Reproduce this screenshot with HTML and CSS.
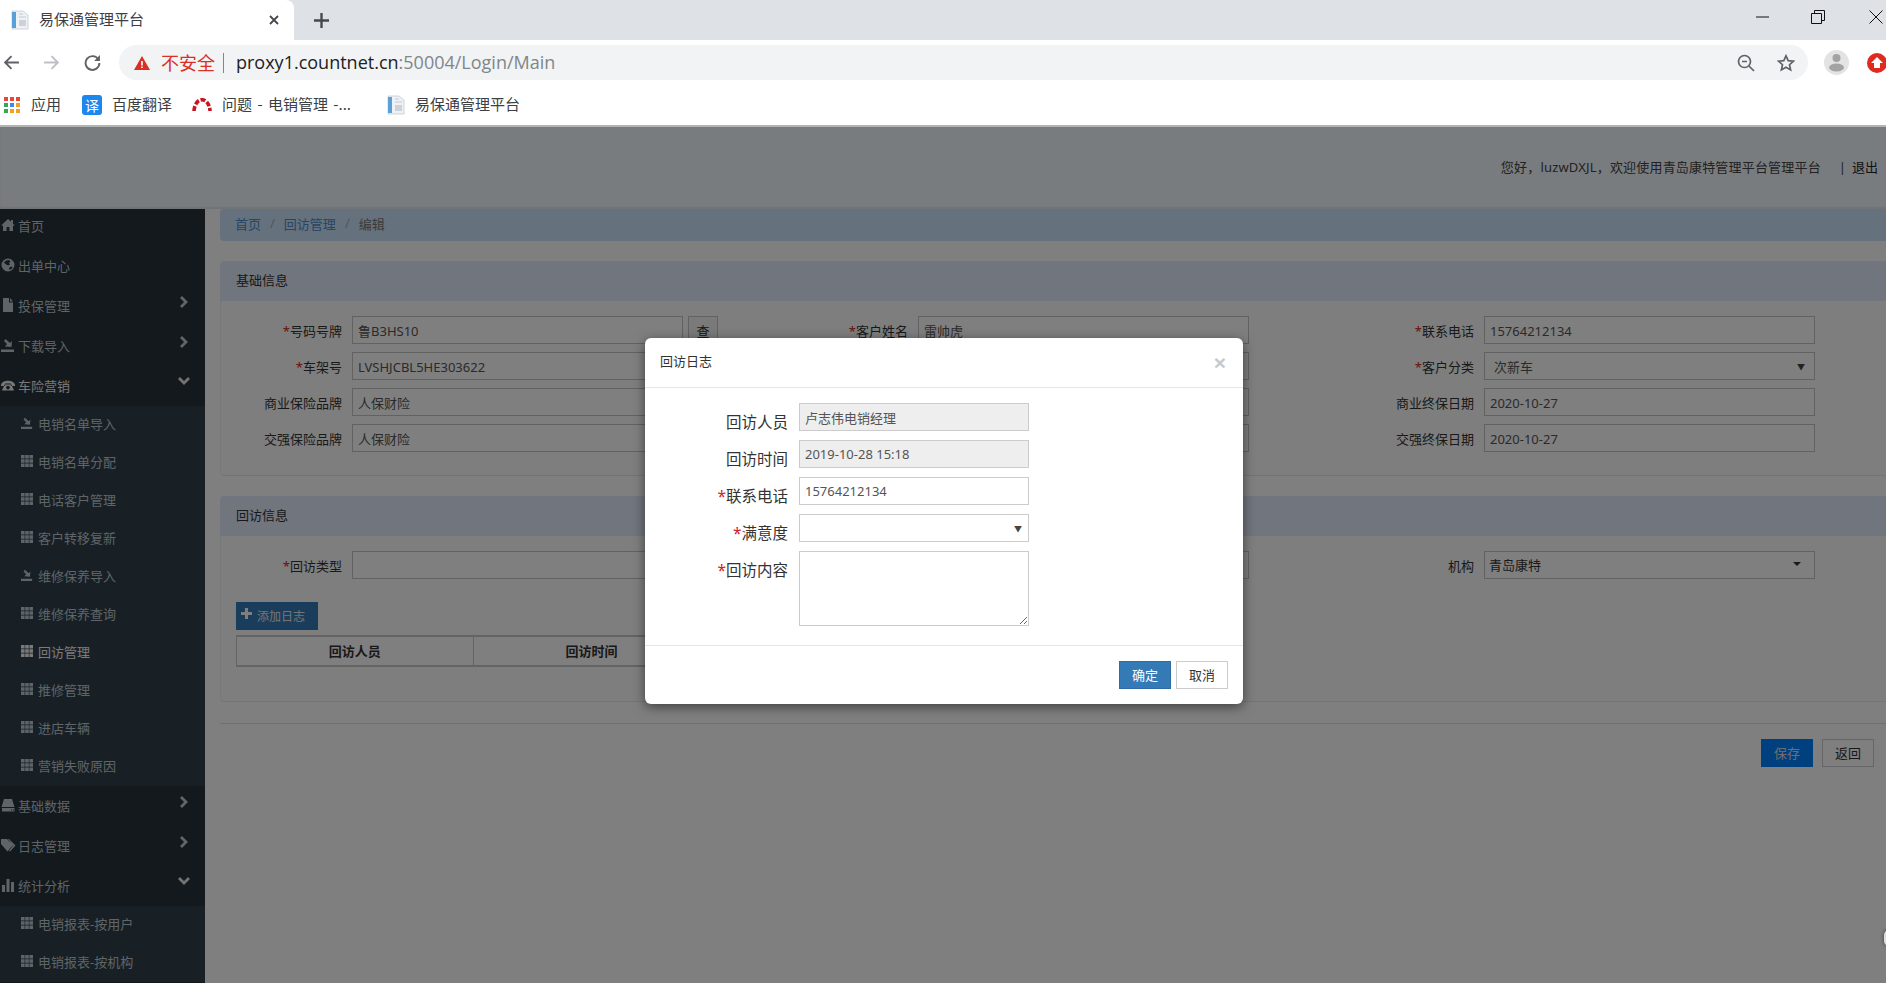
FILE: index.html
```html
<!DOCTYPE html>
<html lang="zh-CN">
<head>
<meta charset="utf-8">
<title>易保通管理平台</title>
<link rel="stylesheet" href="styles.css">
</head>
<body>
<svg class="sprite" xmlns="http://www.w3.org/2000/svg">
  <symbol id="i-home" viewBox="0 0 14 14"><path d="M7 1 0 7.600h2V13h3.600V9h2.800v4H12V7.600h2L12 5.700V2h-2v1.800z"/></symbol>
  <symbol id="i-globe" viewBox="0 0 14 14"><path fill-rule="evenodd" d="M7 .5a6.500 6.500 0 1 0 0 13 6.500 6.500 0 0 0 0-13zM5 2.500 8 2l1.500 1.500L8 5l1 1.500-2 1L4.500 6 3 4.500zM9 9l2.500-.5-.5 2L8.500 12 8 10z"/></symbol>
  <symbol id="i-file" viewBox="0 0 14 14"><path d="M2 0h6v4.500h4V14H2zM9 0l3 3.500H9z"/></symbol>
  <symbol id="i-import" viewBox="0 0 14 14"><path d="M0 11.500h13V14H0zM4.500 1 3 3l3 3-2 2.500 6.500.5.500-6-2 2z"/></symbol>
  <symbol id="i-phone" viewBox="0 0 15 14"><path fill-rule="evenodd" d="M0 6.500C1.500 1 13.500 1 15 6.500V8h-4.500V5.500h-6V8H0zM4 6.500h7L14 13H1zM7.500 7.800a2 2 0 1 0 0 4 2 2 0 0 0 0-4z"/></symbol>
  <symbol id="i-hdd" viewBox="0 0 14 14"><path d="M3 1h8l2.500 8H.5zM1 10h12.500v3.500H1zm9 1.400v1h1v-1zm2 0v1h1v-1z" fill-rule="evenodd"/></symbol>
  <symbol id="i-tags" viewBox="0 0 17 14"><path d="M0 1h6l6 6-5.500 6.500L0 6zM8 1l6.500 6.500L9 13.500 8 12.800l4-5.300L7 1z"/></symbol>
  <symbol id="i-bar" viewBox="0 0 14 14"><path d="M1 7h3v7H1zM5.500 1h3v13h-3zM10 4h3v10h-3z"/></symbol>
  <symbol id="i-th" viewBox="0 0 12 12"><path d="M0 0h3.600v3.600H0zM4.200 0h3.600v3.600H4.200zM8.400 0H12v3.600H8.400zM0 4.200h3.600v3.600H0zM4.200 4.200h3.600v3.600H4.200zM8.400 4.200H12v3.600H8.400zM0 8.400h3.600V12H0zM4.200 8.400h3.600V12H4.200zM8.400 8.400H12V12H8.400z"/></symbol>
  <symbol id="i-right" viewBox="0 0 10 12"><path d="M2 1l5 5-5 5" fill="none" stroke="currentColor" stroke-width="2.800"/></symbol>
  <symbol id="i-down" viewBox="0 0 12 10"><path d="M1 2l5 5 5-5" fill="none" stroke="currentColor" stroke-width="2.800"/></symbol>
  <symbol id="i-fav" viewBox="0 0 20 20"><path d="M2 1h11l5 4v14H2z" fill="#eef1f5" stroke="#c4cad1" stroke-width=".8"/><path d="M2 2h4v16H2z" fill="#5b9fd8"/><path d="M9 4h4M9 7h7" stroke="#c4cad1"/><path d="M9 10h7v6H9z" fill="#cdd2d8"/></symbol>
</svg>

<header class="tabstrip">
  <div class="tab">
    <svg class="tab-fav"><use href="#i-fav"/></svg>
    <span class="tab-title">易保通管理平台</span>
    <svg class="tab-close" viewBox="0 0 10 10"><path d="M1 1l8 8M9 1 1 9"/></svg>
  </div>
  <svg class="tab-new" viewBox="0 0 14 14"><path d="M7 0v14M0 7h14"/></svg>
  <div class="winctl">
    <svg class="win-min" viewBox="0 0 13 2"><path d="M0 1h13"/></svg>
    <svg class="win-max" viewBox="0 0 14 14"><path d="M.5 3.500h10v10H.5zM3.500 3.500v-3h10v10h-3"/></svg>
    <svg class="win-close" viewBox="0 0 14 14"><path d="M.5.500l13 13M13.500.500l-13 13"/></svg>
  </div>
</header>

<div class="toolbar">
  <svg class="nav-ico back" viewBox="0 0 16 16"><path d="M15 8H2M8 2 2 8l6 6"/></svg>
  <svg class="nav-ico fwd" viewBox="0 0 16 16"><path d="M1 8h13M8 2l6 6-6 6"/></svg>
  <svg class="nav-ico reload" viewBox="0 0 16 16"><path d="M13.500 5A6.500 6.500 0 1 0 14.500 8.500"/><path class="fillp" d="M15 1v5.500H9.500z"/></svg>
  <div class="omnibox">
    <svg class="warn" viewBox="0 0 16 14"><path d="M8 0l8 14H0z" fill="#d93025"/><path d="M7.200 5h1.600v4.500H7.200zM7.200 10.500h1.600V12H7.200z" fill="#fff"/></svg>
    <span class="insecure">不安全</span>
    <span class="sep"></span>
    <span class="url"><span class="host">proxy1.countnet.cn</span>:50004/Login/Main</span>
    <svg class="omni-ico zoomout" viewBox="0 0 18 18"><circle cx="7.500" cy="7.500" r="6"/><path d="M12 12l5 5M5 7.500h5"/></svg>
    <svg class="omni-ico star" viewBox="0 0 18 18"><path d="M9 1.800l2.200 4.800 5.200.6-3.900 3.500 1.100 5.200L9 13.200l-4.600 2.700 1.100-5.200L1.600 7.200l5.200-.6z"/></svg>
  </div>
  <svg class="avatar" viewBox="0 0 25 25"><circle cx="12.500" cy="12.500" r="12.500" fill="#e3e3e3"/><circle cx="12.500" cy="8" r="4" fill="#a3a3a3"/><ellipse cx="12.500" cy="17.500" rx="7.500" ry="4" fill="#a3a3a3"/></svg>
  <svg class="ext" viewBox="0 0 20 20"><circle cx="10" cy="10" r="10" fill="#e0291f"/><path d="M10 4l6 6h-3v5H7v-5H4z" fill="#fff"/></svg>
</div>

<div class="bookmarks">
  <div class="bm bm-apps">
    <svg class="bm-ico" viewBox="0 0 16 16"><path fill="#e8453c" d="M0 0h4v4H0zM6 0h4v4H6zM12 0h4v4h-4z"/><path fill="#34a853" d="M0 6h4v4H0zM0 12h4v4H0z"/><path fill="#4285f4" d="M6 6h4v4H6z"/><path fill="#f4a11f" d="M12 6h4v4h-4zM6 12h4v4H6zM12 12h4v4h-4z"/></svg>
    <span>应用</span>
  </div>
  <div class="bm bm-trans">
    <span class="yi">译</span>
    <span>百度翻译</span>
  </div>
  <div class="bm bm-issue">
    <svg class="bm-ico arc" viewBox="0 0 20 14"><path d="M2 13C3 -2 17 -2 18 13" fill="none" stroke="#c8141d" stroke-width="3.600" stroke-dasharray="5 1.800"/></svg>
    <span class="issue-text">问题 - 电销管理 -...</span>
  </div>
  <div class="bm bm-plat">
    <svg class="bm-ico fav"><use href="#i-fav"/></svg>
    <span>易保通管理平台</span>
  </div>
</div>

<div class="app">
  <div class="topbar">
    <span class="welcome">您好，luzwDXJL，欢迎使用青岛康特管理平台管理平台</span>
    <span class="bar-sep">|</span>
    <span class="logout">退出</span>
  </div>

  <div class="workspace">
    <aside class="sidebar">
      <nav class="menu">
        <a class="top"><svg class="ti"><use href="#i-home"/></svg>首页</a>
        <a class="top"><svg class="ti"><use href="#i-globe"/></svg>出单中心</a>
        <a class="top"><svg class="ti"><use href="#i-file"/></svg>投保管理<svg class="chev"><use href="#i-right"/></svg></a>
        <a class="top"><svg class="ti"><use href="#i-import"/></svg>下载导入<svg class="chev"><use href="#i-right"/></svg></a>
        <a class="top on"><svg class="ti"><use href="#i-phone"/></svg>车险营销<svg class="chev down"><use href="#i-down"/></svg></a>
        <div class="subs">
          <a class="sub"><svg class="si"><use href="#i-import"/></svg>电销名单导入</a>
          <a class="sub"><svg class="si"><use href="#i-th"/></svg>电销名单分配</a>
          <a class="sub"><svg class="si"><use href="#i-th"/></svg>电话客户管理</a>
          <a class="sub"><svg class="si"><use href="#i-th"/></svg>客户转移复新</a>
          <a class="sub"><svg class="si"><use href="#i-import"/></svg>维修保养导入</a>
          <a class="sub"><svg class="si"><use href="#i-th"/></svg>维修保养查询</a>
          <a class="sub on"><svg class="si"><use href="#i-th"/></svg>回访管理</a>
          <a class="sub"><svg class="si"><use href="#i-th"/></svg>推修管理</a>
          <a class="sub"><svg class="si"><use href="#i-th"/></svg>进店车辆</a>
          <a class="sub"><svg class="si"><use href="#i-th"/></svg>营销失败原因</a>
        </div>
        <a class="top"><svg class="ti"><use href="#i-hdd"/></svg>基础数据<svg class="chev"><use href="#i-right"/></svg></a>
        <a class="top"><svg class="ti wide-ico"><use href="#i-tags"/></svg>日志管理<svg class="chev"><use href="#i-right"/></svg></a>
        <a class="top"><svg class="ti"><use href="#i-bar"/></svg>统计分析<svg class="chev down"><use href="#i-down"/></svg></a>
        <div class="subs">
          <a class="sub"><svg class="si"><use href="#i-th"/></svg>电销报表-按用户</a>
          <a class="sub"><svg class="si"><use href="#i-th"/></svg>电销报表-按机构</a>
        </div>
      </nav>
    </aside>

    <main class="main">
      <div class="crumbs">
        <a>首页</a><i>/</i><a>回访管理</a><i>/</i><span>编辑</span>
      </div>

      <section class="panel">
        <h3 class="panel-head">基础信息</h3>
        <div class="panel-body">
          <div class="grid">
            <div class="row"><label><em>*</em>号码号牌</label><input class="inp" value="鲁B3HS10" readonly><button class="lookup">查</button></div>
            <div class="row"><label><em>*</em>客户姓名</label><input class="inp" value="雷帅虎" readonly></div>
            <div class="row"><label><em>*</em>联系电话</label><input class="inp" value="15764212134" readonly></div>
            <div class="row"><label><em>*</em>车架号</label><input class="inp" value="LVSHJCBL5HE303622" readonly></div>
            <div class="row"><label></label><input class="inp" readonly></div>
            <div class="row"><label><em>*</em>客户分类</label><div class="sel"><span>次新车</span><b>▼</b></div></div>
            <div class="row"><label>商业保险品牌</label><input class="inp" value="人保财险" readonly></div>
            <div class="row"><label></label><input class="inp" readonly></div>
            <div class="row"><label>商业终保日期</label><input class="inp" value="2020-10-27" readonly></div>
            <div class="row"><label>交强保险品牌</label><input class="inp" value="人保财险" readonly></div>
            <div class="row"><label></label><input class="inp" readonly></div>
            <div class="row"><label>交强终保日期</label><input class="inp" value="2020-10-27" readonly></div>
          </div>
        </div>
      </section>

      <section class="panel second">
        <h3 class="panel-head">回访信息</h3>
        <div class="panel-body tall">
          <div class="grid">
            <div class="row"><label><em>*</em>回访类型</label><input class="inp wide" readonly></div>
            <div class="row"><label></label><input class="inp" readonly></div>
            <div class="row"><label>机构</label><div class="sel sel2"><span>青岛康特</span><b></b></div></div>
          </div>
          <button class="add"><svg class="plus" viewBox="0 0 12 12"><path d="M4.300 0h3.400v4.300H12v3.400H7.700V12H4.300V7.700H0V4.300h4.300z"/></svg>添加日志</button>
          <table class="logs">
            <thead><tr><th>回访人员</th><th>回访时间</th><th></th><th></th></tr></thead>
          </table>
        </div>
      </section>

      <div class="actions">
        <button class="btn primary-save">保存</button>
        <button class="btn">返回</button>
      </div>
    </main>
  </div>

  <div class="backdrop"></div>
  <span class="edge-dot"></span>

  <div class="modal">
    <div class="modal-head">
      <span class="modal-title">回访日志</span>
      <span class="modal-x">×</span>
    </div>
    <div class="modal-body">
      <div class="mrow"><label>回访人员</label><input class="minp off" value="卢志伟电销经理" readonly></div>
      <div class="mrow"><label>回访时间</label><input class="minp off" value="2019-10-28 15:18" readonly></div>
      <div class="mrow"><label><em>*</em>联系电话</label><input class="minp" value="15764212134" readonly></div>
      <div class="mrow"><label><em>*</em>满意度</label><div class="minp msel"><b>▼</b></div></div>
      <div class="mrow area"><label><em>*</em>回访内容</label><textarea class="minp"></textarea></div>
    </div>
    <div class="modal-foot">
      <button class="btn ok">确定</button>
      <button class="btn">取消</button>
    </div>
  </div>
</div>
</body>
</html>
```

FILE: styles.css
```css
* { box-sizing: border-box; }
html, body { margin: 0; padding: 0; height: 983px; overflow: hidden; }
body {
  font-family: "Noto Sans", "Noto Sans CJK SC", sans-serif;
  font-size: 13px;
  color: #333;
  background: #fff;
  display: flex;
  flex-direction: column;
}
.sprite { display: none; }
svg { display: block; flex: none; }

/* browser chrome */
.tabstrip { height: 40px; background: #dee1e6; display: flex; align-items: center; flex: none; }
.tab {
  width: 294px; height: 40px; background: #fff;
  border-radius: 0 8px 0 0;
  display: flex; align-items: center; padding-left: 10px;
}
.tab-fav { width: 20px; height: 20px; }
.tab-title { font-size: 15px; color: #3c4043; margin-left: 9px; padding-bottom: 4px; font-family: "Noto Sans CJK SC", sans-serif; }
.tab-close { width: 10px; height: 10px; margin-left: auto; margin-right: 15px; fill: none; stroke: #45494d; stroke-width: 1.800; }
.tab-new { width: 15px; height: 15px; margin-left: 20px; fill: none; stroke: #45494d; stroke-width: 2.200; }
.winctl { margin-left: auto; display: flex; align-items: center; height: 40px; padding-bottom: 7px; }
.winctl svg { fill: none; stroke: #111; stroke-width: 1; }
.win-min { width: 13px; height: 2px; }
.win-max { width: 14px; height: 14px; margin-left: 42px; }
.win-close { width: 14px; height: 14px; margin-left: 44px; margin-right: 3px; }

.toolbar { height: 48px; background: #fff; display: flex; align-items: center; flex: none; padding-bottom: 3px; overflow: hidden; }
.nav-ico { width: 17px; height: 17px; fill: none; stroke-width: 1.800; stroke: #5f6368; }
.nav-ico .fillp { fill: #5f6368; stroke: none; }
.back { margin-left: 3px; }
.fwd { margin-left: 23px; stroke: #bdc1c6; }
.reload { margin-left: 24px; }
.omnibox {
  width: 1689px; height: 35px; margin-left: 18px; flex: none;
  background: #f1f3f4; border-radius: 18px;
  display: flex; align-items: center; padding-left: 15px;
}
.warn { width: 16px; height: 14px; }
.insecure { color: #d93025; font-size: 18px; margin-left: 11px; padding-bottom: 2px; font-family: "Noto Sans CJK SC", sans-serif; }
.sep { width: 1px; height: 20px; background: #80868b; margin-left: 8px; }
.url { font-family: "Open Sans", sans-serif; font-size: 18px; color: #80868b; margin-left: 12px; padding-bottom: 1px; }
.host { color: #202124; }
.omni-ico { width: 18px; height: 18px; fill: none; stroke: #5f6368; stroke-width: 1.700; }
.zoomout { margin-left: auto; }
.star { margin-left: 22px; margin-right: 13px; }
.avatar { width: 25px; height: 25px; margin-left: 16px; }
.ext { width: 20px; height: 20px; margin-left: 18px; flex: none; }

.bookmarks {
  height: 39px; background: #fff; flex: none;
  border-bottom: 2px solid #b4b4b4;
  display: flex; align-items: center;
  font-size: 15px; color: #3c4043; font-family: "Noto Sans CJK SC", sans-serif;
  padding-bottom: 3px;
}
.bm { display: flex; align-items: center; }
.bm > span:last-child { padding-bottom: 5px; margin-top: 1px; }
.bm-ico { width: 16px; height: 16px; }
.bm-apps { margin-left: 4px; gap: 11px; }
.bm-trans { margin-left: 21px; gap: 10px; }
.bm > .yi {
  width: 20px; height: 20px; border-radius: 3px; background: #1d87f0; color: #fff;
  font-size: 14px; line-height: 20px; text-align: center;
}
.bm-issue { margin-left: 20px; gap: 10px; }
.issue-text { word-spacing: 2px; }
.bm-ico.arc { width: 20px; height: 14px; }
.bm .fav { width: 20px; height: 20px; }
.bm-plat { margin-left: 35px; gap: 9px; }

/* application */
.app { position: relative; flex: 1; min-height: 0; overflow: hidden; display: flex; flex-direction: column; }
.topbar {
  height: 82px; flex: none; background: #f3f8fe;
  display: flex; align-items: center; justify-content: flex-end;
  padding: 0 8px 3px 0; color: #444;
  box-shadow: inset 0 -2px 2px rgba(0,0,0,.08);
}
.welcome { letter-spacing: .18px; }
.bar-sep { margin-left: 18px; }
.logout { margin-left: 6px; color: #222; }
.workspace { flex: 1; display: flex; min-height: 0; }
.sidebar { width: 205px; flex: none; background: #263239; overflow: hidden; }
.menu { margin-top: -3px; }
.menu a { display: flex; align-items: center; color: #bcc8ce; font-size: 13px; }
.top { height: 40px; padding-left: 1px; padding-bottom: 2px; }
.menu .top.on { color: #eeeeee; }
.ti { width: 14px; height: 14px; fill: currentColor; margin-right: 3px; }
.ti.wide-ico { width: 17px; margin-right: 0; }
.chev { width: 10px; height: 12px; margin-left: auto; margin-right: 16px; margin-bottom: 7px; color: #c0ccd6; }
.chev.down { width: 12px; height: 10px; color: #e6e6e6; margin-bottom: 9px; margin-right: 15px; }
.subs { background: #30404a; }
.sub { height: 38px; padding-left: 21px; padding-bottom: 4px; }
.menu .sub.on { color: #f4f4f4; }
.si { width: 12px; height: 12px; fill: currentColor; margin-right: 5px; }

.main { flex: 1; min-width: 0; padding-left: 15px; }
.crumbs {
  height: 32px; background: #cce2fc; border-radius: 4px 0 0 4px;
  display: flex; align-items: center; padding: 0 0 4px 15px;
}
.crumbs a { color: #4b8ccb; }
.crumbs i { font-style: normal; color: #aaa; margin: 0 9px; }
.crumbs span { color: #777; }
.panel {
  margin-top: 20px; background: #fdfdfd;
  border-bottom: 1px solid #e6e9ee;
  border-left: 1px solid #eef1f4;
  border-radius: 4px 0 0 4px;
}
.panel-head {
  margin: 0; height: 40px; background: #e3ebfa;
  font-weight: 400; font-size: 13px; color: #333;
  display: flex; align-items: center; padding: 0 0 4px 16px; margin-left: -1px;
  border-radius: 4px 0 0 0;
}
.panel-body { padding: 15px 0 23px; }
.panel-body.tall { padding-bottom: 34px; }
.grid { display: grid; grid-template-columns: 566px 566px 1fr; row-gap: 8px; margin-left: -1px; }
.row { display: flex; align-items: center; height: 28px; }
.row label { width: 122px; flex: none; text-align: right; margin-right: 10px; padding-top: 1px; }
em { color: #d62020; font-style: normal; }
.inp, .sel {
  width: 331px; height: 28px; border: 1px solid #c4c4c4; background: #fff;
  font: inherit; color: #555; padding: 1px 5px 0; outline: none;
}
.inp.wide { width: 440px; }
.sel { display: flex; align-items: center; padding: 0 9px; }
.sel b { margin-left: auto; font-size: 8px; font-weight: 400; color: #444; }
.sel2 { padding: 0 4px 2px; color: #333; }
.sel2 b { width: 0; height: 0; border: 4px solid transparent; border-top-color: #333; border-bottom: 0; margin-right: 9px; }
.lookup {
  width: 30px; height: 28px; margin-left: 5px; padding: 0; border: 1px solid #c4c4c4;
  background: #f4f4f4; font: inherit; color: #333;
}
.add {
  display: flex; align-items: center; height: 28px; width: 82px; margin: 23px 0 0 15px;
  background: #337ab7; border: 0; color: #e8e8e8; font: inherit; font-size: 12px; padding: 0 0 0 5px;
}
.plus { width: 11px; height: 11px; fill: #fff; margin: -6px 5px 0 0; }
.logs {
  margin: 5px 0 0 15px; width: 948px; height: 32px;
  border-collapse: collapse; table-layout: fixed; background: #fff;
}
.logs th { border: 1px solid #c8c8c8; border-top-width: 2px; border-bottom-width: 2px; font-size: 13px; padding: 0 0 2px; color: #333; }

.actions {
  margin-top: 21px; border-top: 1px solid #e0e0e0; padding: 15px 12px 0 0;
  display: flex; justify-content: flex-end; gap: 9px;
}
.btn {
  width: 52px; height: 28px; padding: 0 0 2px; border: 1px solid #ccc; background: #fff;
  font: inherit; color: #333;
}
.primary-save { background: #0080fe; border-color: #0080fe; color: #ddd; }

.backdrop { position: absolute; inset: 0; background: rgba(0,0,0,.5); }
.edge-dot { position: absolute; left: 1884px; top: 803px; width: 10px; height: 16px; border-radius: 5px; background: #ddd; box-shadow: 0 0 4px rgba(0,0,0,.5); }

/* modal */
.modal {
  position: absolute; left: 645px; top: 211px; width: 598px;
  background: #fff; border-radius: 6px;
  box-shadow: 0 3px 12px rgba(0,0,0,.5);
}
.modal-head {
  height: 50px; border-bottom: 1px solid #e5e5e5;
  display: flex; align-items: center; padding: 0 15px 3px;
}
.modal-title { color: #333; padding-bottom: 2px; }
.modal-x { margin-left: auto; font-size: 21px; font-weight: 700; line-height: 1; color: #c9c9c9; margin-right: 2px; padding-top: 3px; font-family: "Liberation Sans", sans-serif; }
.modal-body { padding: 15px 0 19px; display: flex; flex-direction: column; gap: 9px; }
.mrow { display: flex; height: 28px; }
.mrow.area { height: 75px; }
.mrow label {
  width: 143px; flex: none; text-align: right; margin-right: 11px;
  font-size: 15.500px; line-height: 20px; padding-top: 9px; color: #333;
}
.minp {
  width: 230px; height: 28px; border: 1px solid #ccc; background: #fff;
  font: inherit; color: #555; padding: 0 5px; outline: none;
}
.minp.off { background: #eee; }
.msel { display: flex; align-items: center; justify-content: flex-end; padding-right: 6px; }
.msel b { font-size: 8px; font-weight: 400; color: #444; }
.area .minp { height: 75px; resize: both; display: block; }
.modal-foot {
  border-top: 1px solid #e5e5e5; padding: 15px 15px 15px 0;
  display: flex; justify-content: flex-end; gap: 5px;
}
.btn.ok { background: #337ab7; border-color: #2e6da4; color: #fff; }
```
